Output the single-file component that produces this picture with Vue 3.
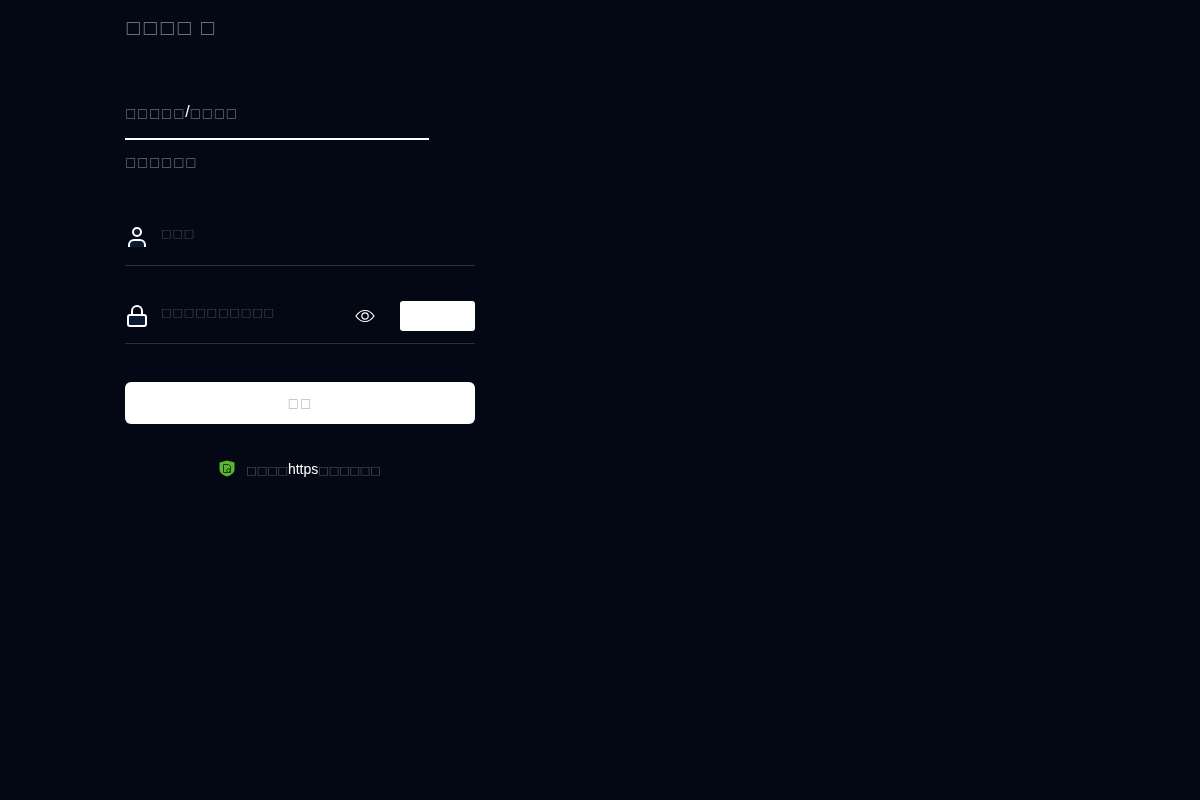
<script setup>
import { ref } from 'vue'

const phone = ref('')
const code = ref('')
</script>

<template>
  <main class="login">
    <h1 class="title">□□□□ □</h1>

    <div class="tabs">
      <span class="tab">□□□□□<i>/</i>□□□□</span>
    </div>
    <p class="hint">□□□□□□</p>

    <form class="form" @submit.prevent>
      <div class="field">
        <svg class="icon" width="24" height="24" viewBox="0 0 24 24" fill="#0c1a36" stroke="#fff" stroke-width="2">
          <circle cx="12" cy="7" r="4" />
          <path d="M4 22v-2a5 5 0 0 1 5-5h6a5 5 0 0 1 5 5v2" />
        </svg>
        <input v-model="phone" class="input" placeholder="□□□" />
      </div>

      <div class="field field-code">
        <svg class="icon" width="24" height="24" viewBox="0 0 24 24" fill="#0c1a36" stroke="#fff" stroke-width="2">
          <rect x="3" y="11" width="18" height="11" rx="2" />
          <path d="M7 11V7a5 5 0 0 1 10 0v4" fill="none" />
        </svg>
        <input v-model="code" class="input" placeholder="□□□□□□□□□□" />
        <svg class="eye" width="20" height="14" viewBox="0 0 20 14" fill="none" stroke="#fff" stroke-width="1.2">
          <path d="M1 7c2.400-3.600 5.400-5.500 9-5.500s6.600 1.900 9 5.500c-2.400 3.600-5.400 5.500-9 5.500s-6.600-1.900-9-5.500z" />
          <circle cx="10" cy="7" r="3.200" />
        </svg>
        <button type="button" class="send"></button>
      </div>

      <button class="submit">□□</button>
    </form>

    <div class="secure">
      <svg class="shield" width="16" height="17" viewBox="0 0 16 17">
        <path d="M8 0.500 15.500 2.500v7c0 3.400-3.200 5.700-7.500 7-4.300-1.300-7.500-3.600-7.500-7v-7z" fill="#5cb531" />
        <path d="M4.500 4.500h5l2 2v6h-7z" fill="none" stroke="#143d14" />
        <circle cx="9.500" cy="10.500" r="1.800" fill="none" stroke="#143d14" />
      </svg>
      <span class="secure-text">□□□□<em>https</em>□□□□□□</span>
    </div>
  </main>
</template>

<style>
html, body { background: #030814; }
</style>

<style scoped>
.login {
  box-sizing: border-box;
  width: 350px;
  min-height: 800px;
  margin-left: 125px;
  padding-top: 15px;
  font-family: "DejaVu Sans", sans-serif;
  color: #fff;
  will-change: transform;
}
.title {
  margin: 0;
  font-size: 17px;
  line-height: 24px;
  font-weight: 400;
  letter-spacing: 0.900px;
  color: #6b6e76;
}
.tabs {
  width: 304px;
  margin-top: 64px;
  border-bottom: 2px solid #fff;
  padding-bottom: 15px;
}
.tab {
  display: block;
  font-size: 12px;
  line-height: 20px;
  letter-spacing: 0.700px;
  color: #6b6e76;
}
.tab i {
  font: 16px "Liberation Sans", sans-serif;
  letter-spacing: 0;
  color: #fff;
}
.hint {
  margin: 12px 0 0;
  font-size: 12px;
  line-height: 20px;
  letter-spacing: 0.700px;
  color: #6b6e76;
}
.form {
  margin-top: 37px;
}
.field {
  display: flex;
  align-items: center;
  height: 56px;
  border-bottom: 1px solid #2b2f38;
}
.field-code {
  height: 54px;
  margin-top: 21px;
  padding-top: 2px;
}
.icon {
  flex: none;
}
.input {
  flex: 1;
  min-width: 0;
  margin: 0 0 7px 12px;
  padding: 0;
  border: 0;
  outline: 0;
  background: transparent;
  font: 11px "DejaVu Sans", sans-serif;
  letter-spacing: 1px;
  color: #fff;
}
.input::placeholder {
  color: #464951;
}
.eye {
  flex: none;
  margin: 0 25px 0 8px;
}
.send {
  flex: none;
  width: 75px;
  height: 30px;
  border: 0;
  border-radius: 3px;
  background: #fff;
}
.submit {
  display: block;
  width: 100%;
  height: 42px;
  margin-top: 38px;
  border: 0;
  border-radius: 6px;
  background: #fff;
  color: #bbb;
  font: 12px "DejaVu Sans", sans-serif;
  letter-spacing: 1px;
}
.secure {
  display: flex;
  align-items: center;
  justify-content: center;
  gap: 11px;
  margin-top: 36px;
}
.secure-text {
  font-size: 11px;
  color: #55585f;
}
.secure-text em {
  font: 14px "Liberation Sans", sans-serif;
  color: #fff;
}
</style>
